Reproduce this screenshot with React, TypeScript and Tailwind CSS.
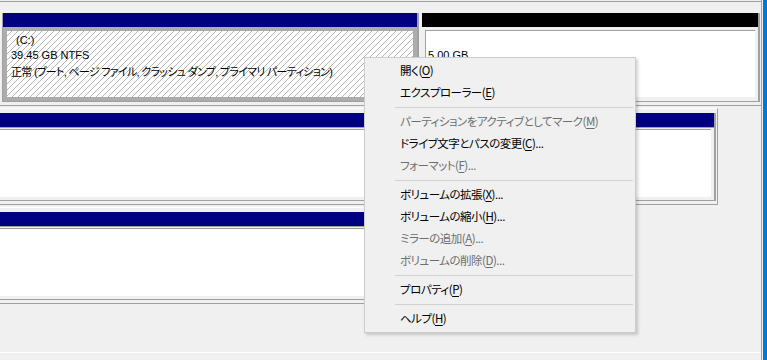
import type { ReactNode } from 'react';

const latin = "font-['Liberation_Sans','Noto_Sans_CJK_JP',sans-serif] [font-feature-settings:'palt']";
const hatch =
  'bg-[repeating-linear-gradient(135deg,#ffffff_0px,#ffffff_3.3px,#b4b4b4_3.3px,#b4b4b4_4.24px)]';

type MenuItem = { t: string; k: string; on: boolean; dots?: boolean } | 'sep';

const menuItems: MenuItem[] = [
  { t: '開く', k: 'O', on: true },
  { t: 'エクスプローラー', k: 'E', on: true },
  'sep',
  { t: 'パーティションをアクティブとしてマーク', k: 'M', on: false },
  { t: 'ドライブ文字とパスの変更', k: 'C', on: true, dots: true },
  { t: 'フォーマット', k: 'F', on: false, dots: true },
  'sep',
  { t: 'ボリュームの拡張', k: 'X', on: true, dots: true },
  { t: 'ボリュームの縮小', k: 'H', on: true, dots: true },
  { t: 'ミラーの追加', k: 'A', on: false, dots: true },
  { t: 'ボリュームの削除', k: 'D', on: false, dots: true },
  'sep',
  { t: 'プロパティ', k: 'P', on: true },
  'sep',
  { t: 'ヘルプ', k: 'H', on: true },
];

function PlainPart({ cls, head, children }: { cls: string; head: string; children?: ReactNode }) {
  return (
    <div className={`flex flex-col border-r-2 border-b border-[#a0a0a0] ${cls}`}>
      <div className={`h-[14px] shrink-0 ${head}`} />
      <div className="flex flex-1 flex-col border-t border-[#a0a0a0] pt-[1px] pr-[3px] pb-[3px] pl-[3px]">
        <div className="flex-1 border-t border-l border-[#a0a0a0] bg-white">{children}</div>
      </div>
    </div>
  );
}

function ContextMenu() {
  return (
    <div
      className={`absolute left-[364px] top-[57px] w-[272px] border border-[#cccccc] bg-[#f0f0f0] py-[2px] text-[11.5px] tracking-[-0.5px] shadow-[2px_2px_3px_rgba(0,0,0,0.18)] font-['Noto_Sans_CJK_JP',sans-serif] [font-feature-settings:'palt']`}>
      {menuItems.map((it, i) =>
        it === 'sep' ? (
          <div key={i} className="flex h-[7px] items-center pl-[30px] pr-[2px]">
            <div className="h-px w-full bg-[#d2d2d2]" />
          </div>
        ) : (
          <div
            key={i}
            className={`flex h-[22px] items-center pl-[35px] leading-none ${
              it.on ? 'text-black' : 'text-[#6d6d6d]'
            }`}>
            <span>
              {it.t}(<span className="underline underline-offset-2">{it.k}</span>){it.dots ? '...' : ''}
            </span>
          </div>
        )
      )}
    </div>
  );
}

export default function App() {
  return (
    <div className={`relative flex h-[360px] w-[767px] overflow-hidden bg-[#f0f0f0] text-[11px] text-black ${latin}`}>
      <div className="flex w-[762px] shrink-0 flex-col overflow-hidden border-r border-[#a0a0a0] pt-[1px]">
        {/* disk row with C: */}
        <div className="flex border-t border-b border-[#a0a0a0] pt-[11px] pb-[3px] pl-[2px]">
          <div className="flex h-[89px] gap-[3px] border-l border-[#a0a0a0]">
            <div className="flex w-[416px] flex-col border-r-2 border-b border-[#a0a0a0]">
              <div className="h-[14px] shrink-0 bg-[#000080]" />
              <div className="flex flex-1 flex-col bg-[#acacac] p-[4px]">
                <div className={`flex-1 pl-[4px] pt-[2px] whitespace-nowrap ${hatch}`}>
                  <div className="h-[15px] pl-[5px] leading-[15px]">(C:)</div>
                  <div className="h-[15px] leading-[15px]">39.45 GB NTFS</div>
                  <div className="mt-[1px] h-[16px] leading-[16px] tracking-[-0.7px]">
                    正常 (ブート, ページ ファイル, クラッシュ ダンプ, プライマリ パーティション)
                  </div>
                </div>
              </div>
            </div>
            <div className="flex w-[338px] flex-col border-r-2 border-b border-[#a0a0a0]">
              <div className="h-[14px] shrink-0 bg-black" />
              <div className="flex flex-1 flex-col pt-[3px] pr-[3px] pb-[4px] pl-[3px]">
                <div className="flex-1 border-t border-l border-[#a0a0a0] bg-white pl-[2px] pt-[2px] whitespace-nowrap">
                  <div className="h-[15px]" />
                  <div className="h-[15px] leading-[15px]">5.00 GB</div>
                </div>
              </div>
            </div>
          </div>
        </div>

        {/* second disk row */}
        <div className="pt-[2px]">
          <div className="flex w-[718px] border-t border-t-white border-r border-b border-[#a0a0a0] pt-[4px] pr-[1px] pb-[3px]">
            <PlainPart cls="-ml-[10px] h-[88px] w-[726px]" head="bg-[#000080]" />
          </div>
        </div>

        {/* third disk row */}
        <div className="pt-[2px]">
          <div className="flex w-[560px] border-t border-t-white border-r border-b border-[#a0a0a0] pt-[4px] pr-[1px] pb-[3px]">
            <PlainPart cls="-ml-[10px] h-[88px] w-[568px]" head="bg-[#000080]" />
          </div>
        </div>

        <div className="mt-[48px] flex-1 border-t border-white" />
      </div>
      <div className="w-px shrink-0" />
      <div className="w-[4px] shrink-0 bg-[#0078d7]" />

      <ContextMenu />
    </div>
  );
}
